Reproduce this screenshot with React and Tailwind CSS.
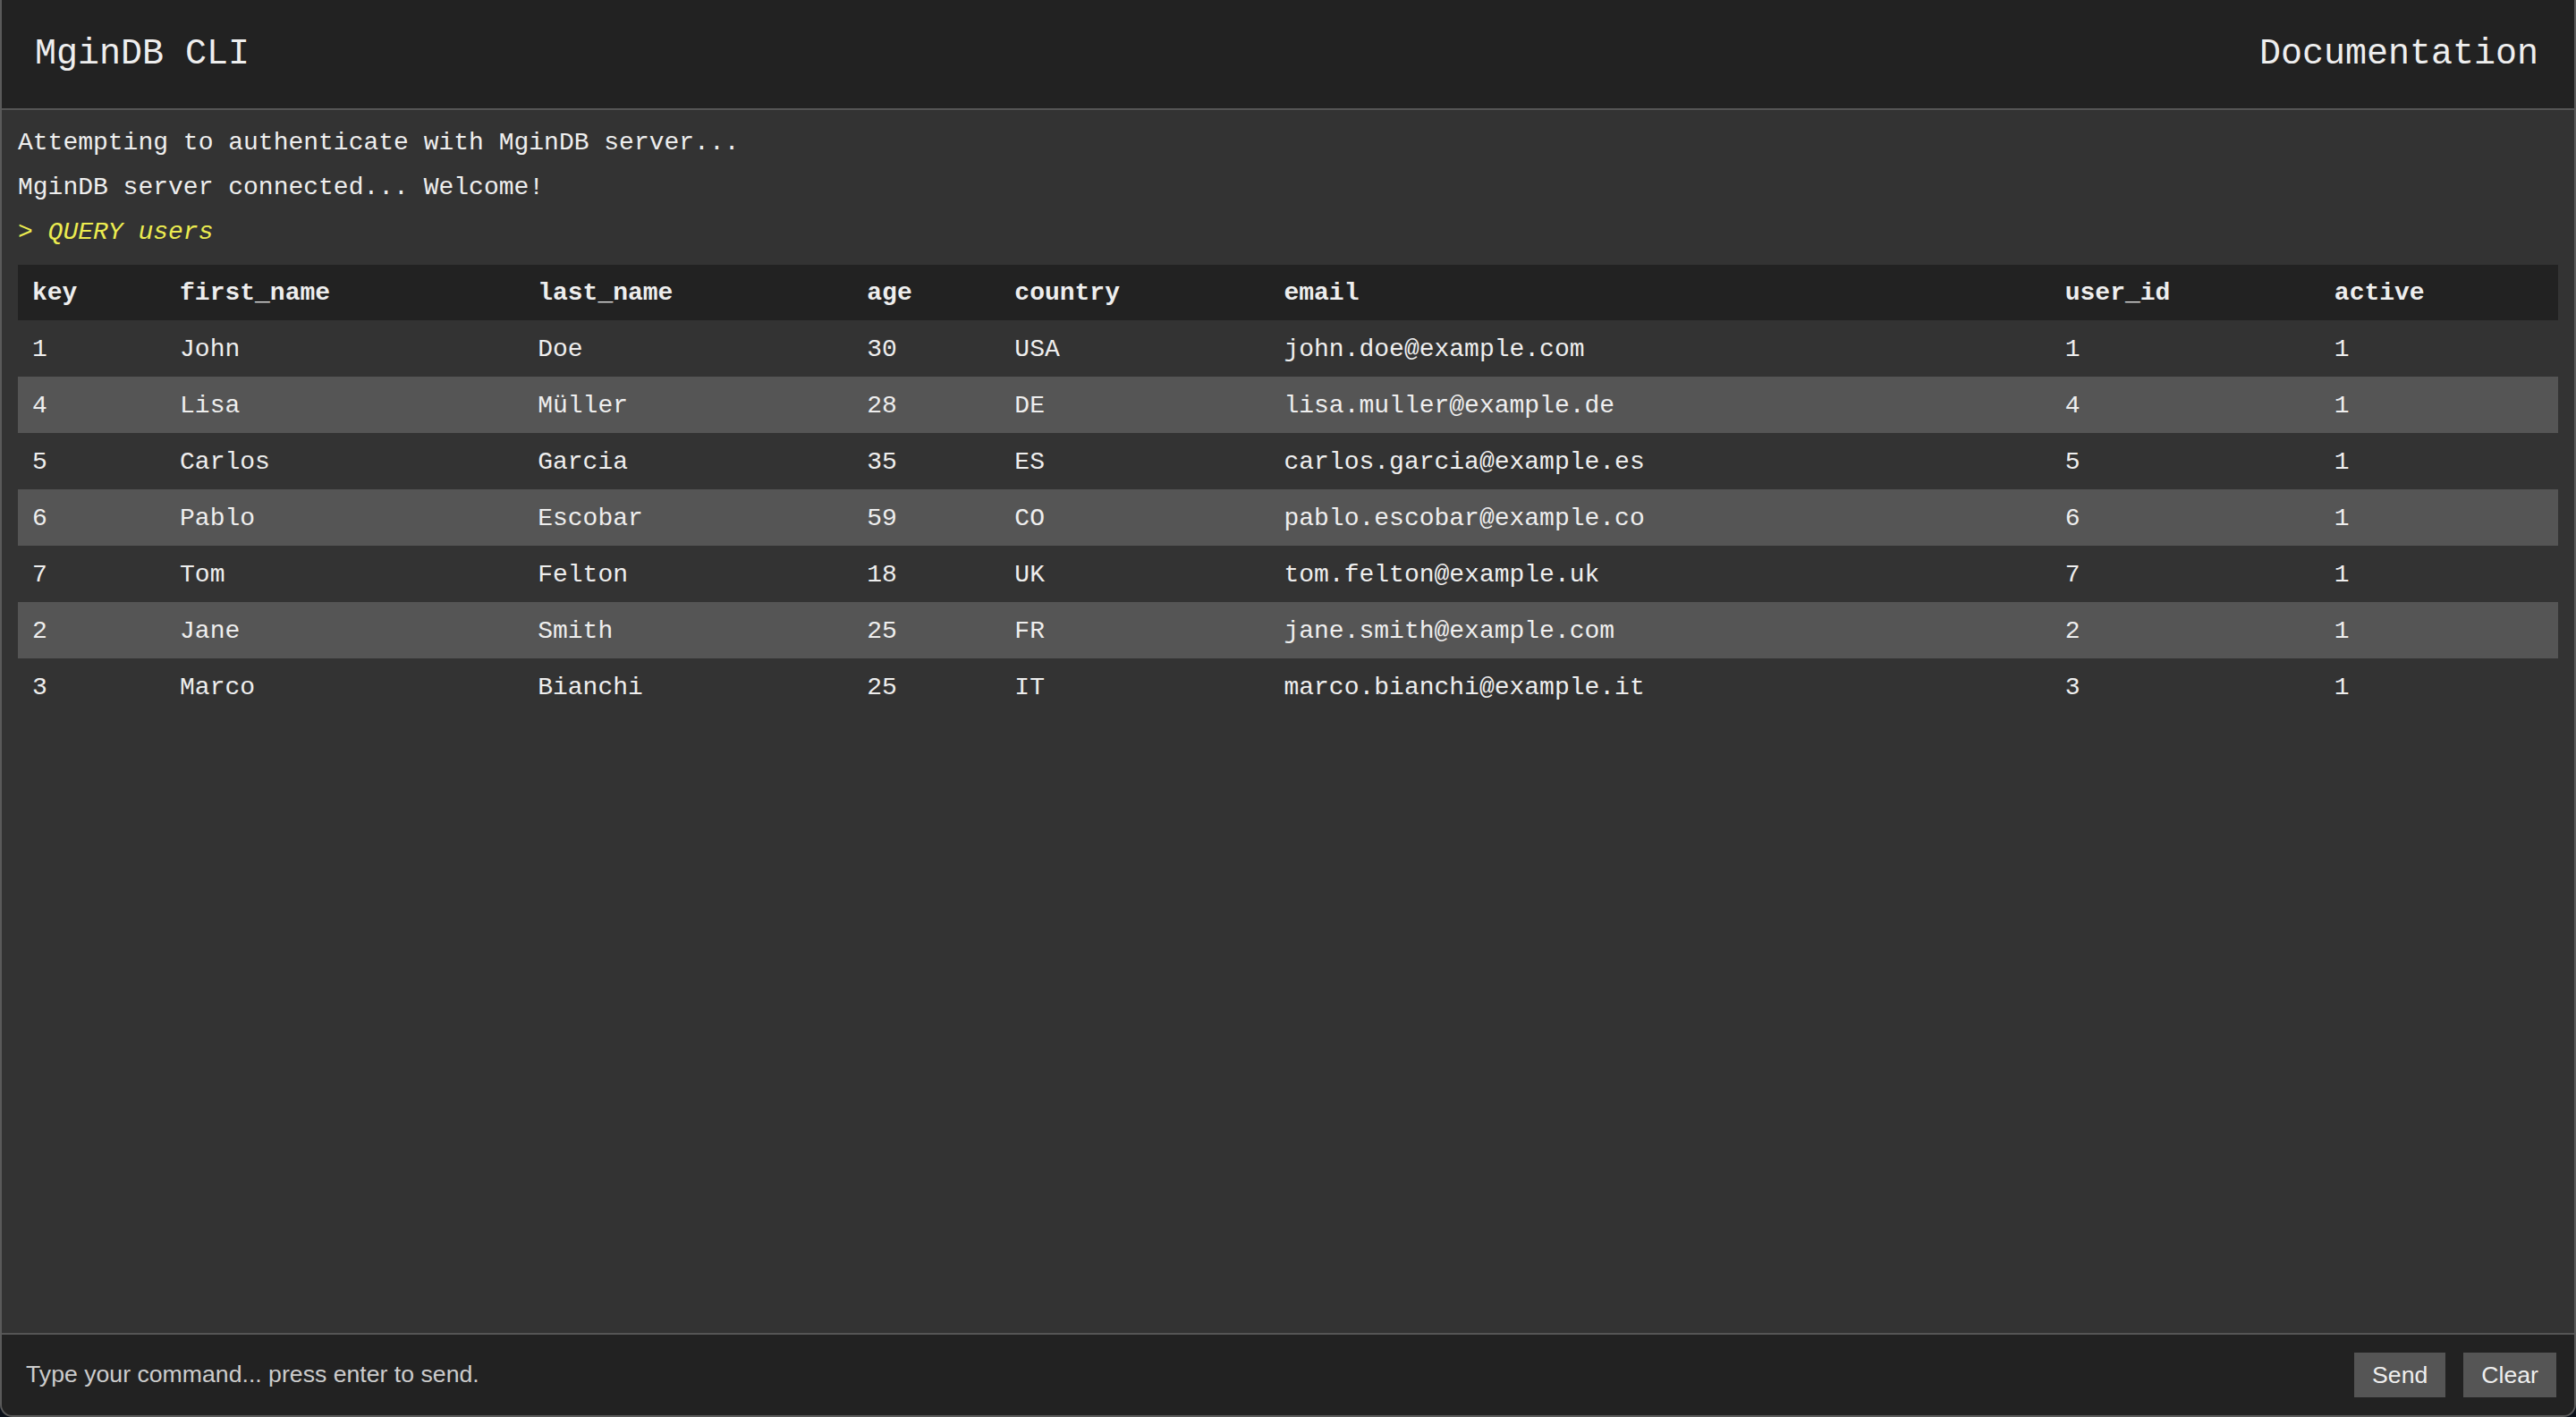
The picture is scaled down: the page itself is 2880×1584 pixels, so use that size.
import { useState } from "react";

// rows as returned by the QUERY users command
const columns = [
  { key: "key", w: "w-[165px]" },
  { key: "first_name", w: "w-[400px]" },
  { key: "last_name", w: "w-[368px]" },
  { key: "age", w: "w-[165px]" },
  { key: "country", w: "w-[301px]" },
  { key: "email", w: "w-[873px]" },
  { key: "user_id", w: "w-[301px]" },
  { key: "active", w: "w-[266px]" },
];

const rows = [
  { key: 1, first_name: "John", last_name: "Doe", age: 30, country: "USA", email: "john.doe@example.com", user_id: 1, active: 1 },
  { key: 4, first_name: "Lisa", last_name: "Müller", age: 28, country: "DE", email: "lisa.muller@example.de", user_id: 4, active: 1 },
  { key: 5, first_name: "Carlos", last_name: "Garcia", age: 35, country: "ES", email: "carlos.garcia@example.es", user_id: 5, active: 1 },
  { key: 6, first_name: "Pablo", last_name: "Escobar", age: 59, country: "CO", email: "pablo.escobar@example.co", user_id: 6, active: 1 },
  { key: 7, first_name: "Tom", last_name: "Felton", age: 18, country: "UK", email: "tom.felton@example.uk", user_id: 7, active: 1 },
  { key: 2, first_name: "Jane", last_name: "Smith", age: 25, country: "FR", email: "jane.smith@example.com", user_id: 2, active: 1 },
  { key: 3, first_name: "Marco", last_name: "Bianchi", age: 25, country: "IT", email: "marco.bianchi@example.it", user_id: 3, active: 1 },
];

function App() {
  const [command, setCommand] = useState("");

  return (
    <div className="h-screen bg-[#0b111a]">
      <div className="flex h-full flex-col overflow-hidden rounded-b-[14px] border-2 border-t-0 border-[#5a5a5a] bg-[#333333] font-['Liberation_Mono',monospace] text-[#eeeeee]">
        {/* header */}
        <header className="flex h-[123px] shrink-0 items-center justify-between border-b-2 border-[#555555] bg-[#222222] pl-[37px] pr-[40px] text-[40px]">
          <span>MginDB CLI</span>
          <span>Documentation</span>
        </header>

        {/* output */}
        <main className="flex-1 overflow-auto px-[18px] pt-[12px] text-[28px]">
          <div className="leading-[50px]">Attempting to authenticate with MginDB server...</div>
          <div className="leading-[50px]">MginDB server connected... Welcome!</div>
          <div className="italic leading-[50px] text-[#ecec50]">&gt; QUERY users</div>
          <table className="mt-[11px] w-full table-fixed border-collapse text-left">
            <thead>
              <tr className="bg-[#222222]">
                {columns.map((c) => (
                  <th key={c.key} className={`${c.w} px-[16px] pt-[16px] pb-[14px] font-bold leading-[32px]`}>
                    {c.key}
                  </th>
                ))}
              </tr>
            </thead>
            <tbody>
              {rows.map((r, i) => (
                <tr key={r.key} className={i % 2 === 1 ? "bg-[#555555]" : "bg-[#333333]"}>
                  {columns.map((c) => (
                    <td key={c.key} className="px-[16px] pt-[17px] pb-[15px] leading-[31px]">
                      {r[c.key]}
                    </td>
                  ))}
                </tr>
              ))}
            </tbody>
          </table>
        </main>

        {/* input bar */}
        <footer className="flex shrink-0 items-center gap-[20px] border-t-2 border-[#555555] bg-[#222222] p-[20px] font-['Liberation_Sans',Arial,sans-serif]">
          <input
            type="text"
            value={command}
            onChange={(e) => setCommand(e.target.value)}
            placeholder="Type your command... press enter to send."
            className="flex-1 bg-transparent pl-[7px] text-[26.67px] text-[#eeeeee] outline-none placeholder:text-[#cccccc]"
          />
          <button className="bg-[#555555] px-[20px] py-[10px] text-[26.67px] leading-[30px] text-[#eeeeee]">
            Send
          </button>
          <button className="bg-[#555555] px-[20px] py-[10px] text-[26.67px] leading-[30px] text-[#eeeeee]">
            Clear
          </button>
        </footer>
      </div>
    </div>
  );
}

export default App;
